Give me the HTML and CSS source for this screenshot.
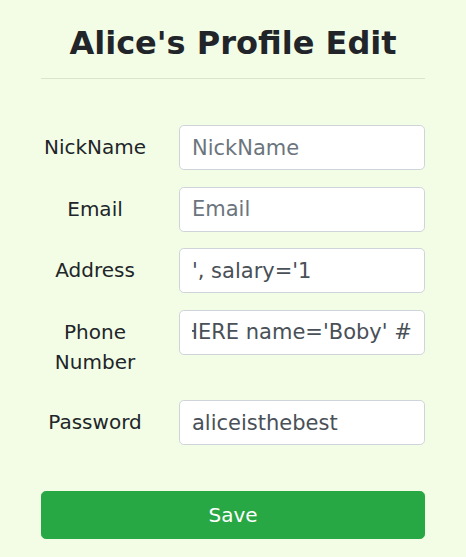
FILE: index.html
```html
<!DOCTYPE html>
<html lang="en">
<head>
<meta charset="utf-8">
<title>Alice's Profile Edit</title>
<link rel="stylesheet" href="styles.css">
</head>
<body>
<main class="page">
  <h2 class="title">Alice's Profile Edit</h2>
  <hr class="divider">
  <form class="profile-form">
    <div class="form-row">
      <label class="form-label" for="nickname">NickName</label>
      <input class="form-input" id="nickname" type="text" placeholder="NickName">
    </div>
    <div class="form-row">
      <label class="form-label" for="email">Email</label>
      <input class="form-input" id="email" type="text" placeholder="Email">
    </div>
    <div class="form-row">
      <label class="form-label" for="address">Address</label>
      <input class="form-input" id="address" type="text" value="', salary='1">
    </div>
    <div class="form-row">
      <label class="form-label" for="phone">Phone Number</label>
      <input class="form-input" id="phone" type="text" value="' WHERE name='Boby' #">
    </div>
    <div class="form-row">
      <label class="form-label" for="password">Password</label>
      <input class="form-input" id="password" type="text" value="aliceisthebest">
    </div>
    <button class="save-button" type="button">Save</button>
  </form>
</main>
<script src="script.js"></script>
</body>
</html>
```
FILE: styles.css
```css
html, body {
  margin: 0;
  padding: 0;
  background: #f3fde6;
}
body {
  font-family: "DejaVu Sans", sans-serif;
  color: #212529;
}
.page {
  padding: 24px 41px 0;
}
.title {
  margin: 0;
  font-size: 32px;
  font-weight: 700;
  line-height: 38.4px;
  text-align: center;
  color: #212529;
}
.divider {
  margin: 15.6px 0 0;
  border: 0;
  border-top: 1px solid rgba(0, 0, 0, 0.1);
  height: 0;
}
.profile-form {
  display: flex;
  flex-direction: column;
  margin-top: 46px;
}
.form-row {
  display: grid;
  grid-template-columns: 108px 1fr;
  column-gap: 30px;
  align-items: start;
  margin-bottom: 16.6px;
}
.form-label {
  font-size: 20px;
  line-height: 30px;
  padding: 7px 0;
  text-align: center;
}
.form-input {
  box-sizing: border-box;
  width: 100%;
  height: 45px;
  margin: 0;
  padding: 0 12px;
  font-family: "DejaVu Sans", sans-serif;
  font-size: 21px;
  color: #495057;
  background: #fff;
  border: 1px solid #ced4da;
  border-radius: 4.8px;
  outline: none;
}
.form-input::placeholder {
  color: #6c757d;
  opacity: 1;
}
.save-button {
  display: block;
  box-sizing: border-box;
  width: 100%;
  height: 48px;
  margin-top: 28.6px;
  padding: 0;
  font-family: "DejaVu Sans", sans-serif;
  font-size: 20px;
  color: #fff;
  background: #28a745;
  border: 1px solid #28a745;
  border-radius: 4.8px;
}
```
FILE: script.js
```js
var phone = document.getElementById('phone');
phone.scrollLeft = phone.scrollWidth;
```
